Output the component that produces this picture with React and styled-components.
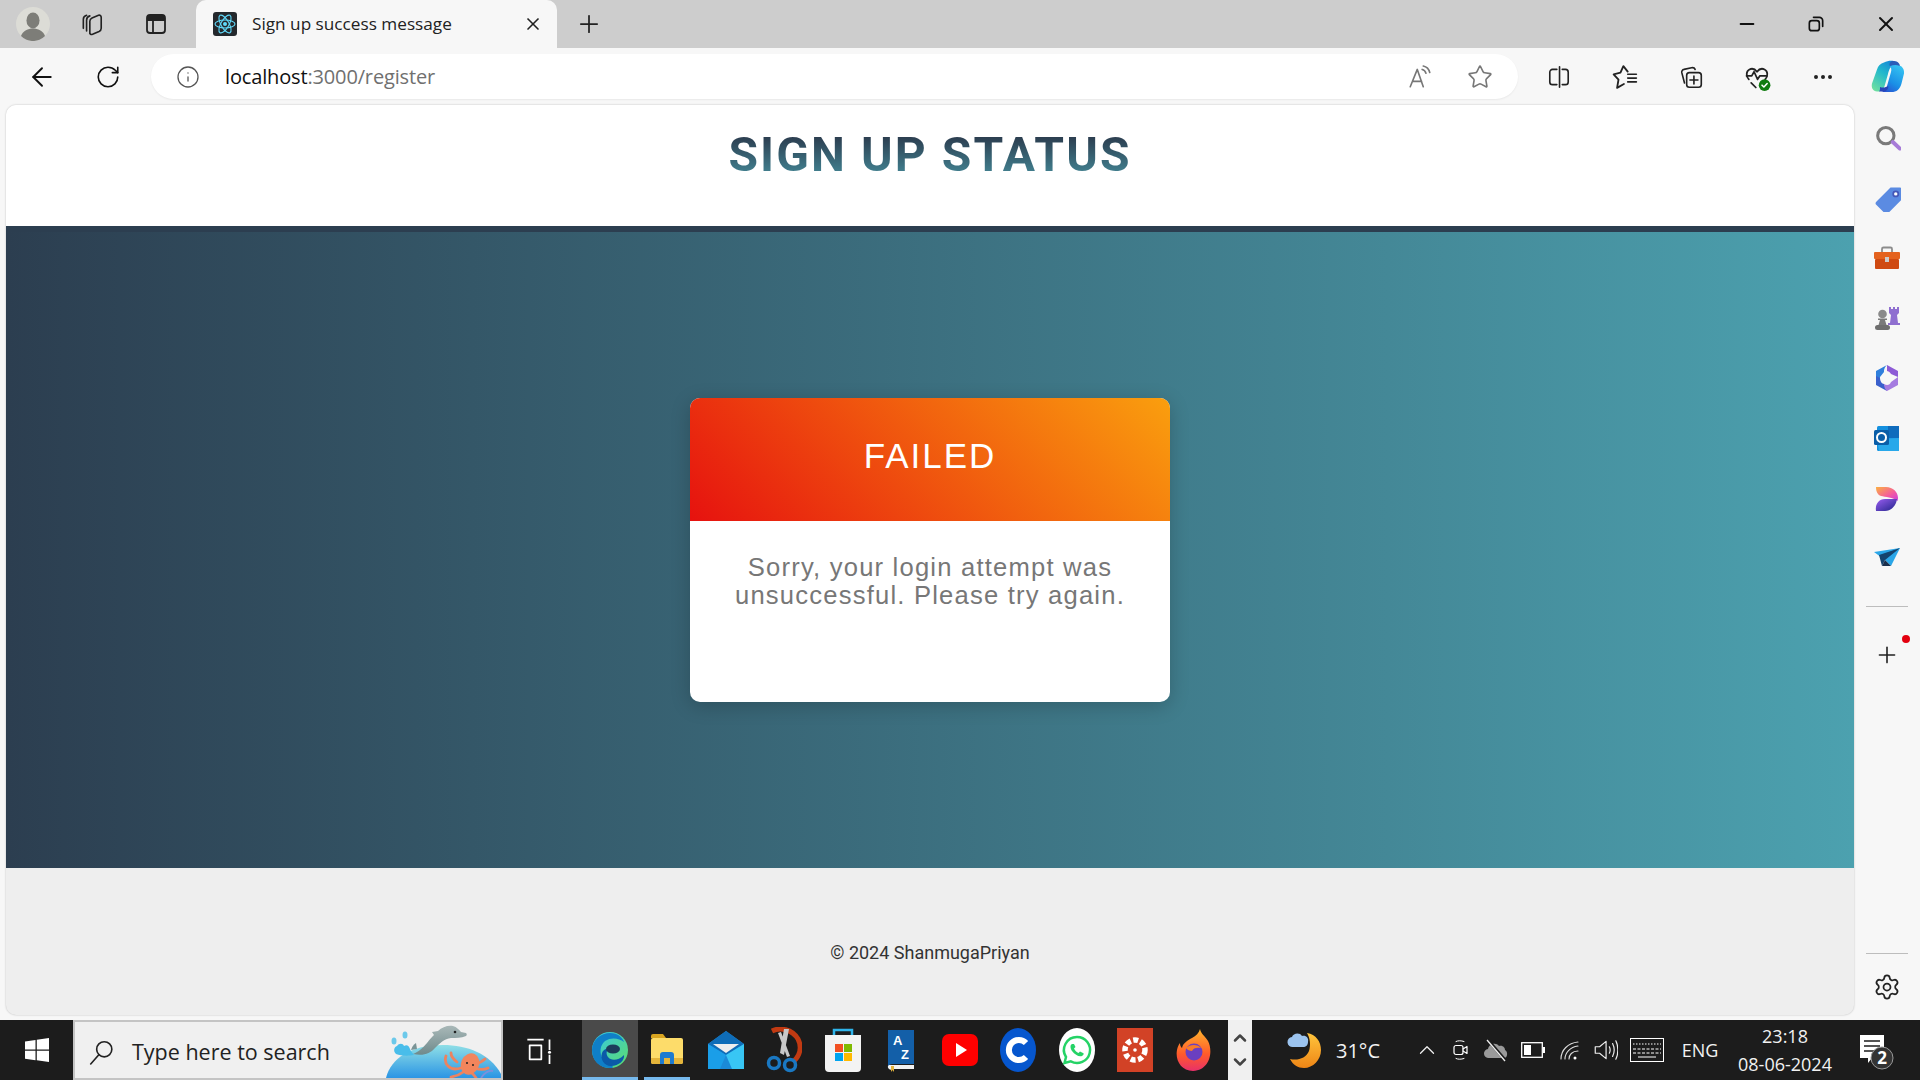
import React from 'react';
import styled, { createGlobalStyle } from 'styled-components';
import { ArrowLeft, RotateCw, Info, Star, X, Plus, Minus, Settings, ChevronUp, ChevronDown, Ellipsis } from 'lucide-react';

const Global = createGlobalStyle`
  html, body { margin: 0; padding: 0; height: 100%; overflow: hidden; }
  #root { height: 100%; }
`;

const Screen = styled.div`
  width: 1920px;
  height: 1080px;
  display: flex;
  flex-direction: column;
  background: #f7f7f7;
  font-family: "Open Sans", "Liberation Sans", sans-serif;
  overflow: hidden;
`;

// browser chrome
const TabStrip = styled.div`
  height: 48px;
  flex: none;
  display: flex;
  align-items: stretch;
  background: #cdcdcd;
  color: #111;
`;
const Cell = styled.div`
  width: ${(p) => p.$w || 60}px;
  height: ${(p) => (p.$h ? `${p.$h}px` : 'auto')};
  margin-right: ${(p) => p.$mr || 0}px;
  flex: none;
  display: flex;
  align-items: center;
  justify-content: center;
  position: relative;
`;
const Tab = styled.div`
  width: 361px;
  margin-left: 2px;
  flex: none;
  display: flex;
  align-items: center;
  padding: 0 14px 0 17px;
  box-sizing: border-box;
  background: #f7f7f7;
  border-radius: 10px 10px 0 0;
`;
const TabTitle = styled.span`
  margin: -2px 0 0 15px;
  flex: 1;
  font-size: 17.2px;
  color: #222;
  white-space: nowrap;
`;
const Spacer = styled.div`
  flex: 1;
`;
const Toolbar = styled.div`
  height: 57px;
  flex: none;
  display: flex;
  align-items: center;
  padding-left: 12px;
  box-sizing: border-box;
`;
const Address = styled.div`
  width: 1367px;
  height: 45px;
  margin: 0 8px 0 7px;
  flex: none;
  display: flex;
  align-items: center;
  background: #fff;
  border-radius: 23px;
  box-shadow: 0 1px 2px rgba(0, 0, 0, 0.06);
`;
const Url = styled.span`
  flex: 1;
  margin-left: 0;
  font-size: 20px;
  color: #111;
  letter-spacing: -0.15px;
`;
const UrlRest = styled.span`
  color: #707070;
`;

// body
const Body = styled.div`
  flex: 1;
  min-height: 0;
  display: flex;
`;
const PageFrame = styled.div`
  width: 1848px;
  margin: 0 0 5px 6px;
  flex: none;
  display: flex;
  flex-direction: column;
  background: #eee;
  border-radius: 10px;
  overflow: hidden;
  box-shadow: 0 0 2px rgba(0, 0, 0, 0.25);
`;
const PageHeader = styled.header`
  height: 127px;
  flex: none;
  box-sizing: border-box;
  padding-top: 22px;
  background: #fff;
  border-bottom: 6px solid #2c3e50;
  text-align: center;
`;
const PageTitle = styled.h1`
  margin: 0;
  display: inline-block;
  font-family: Roboto, sans-serif;
  font-size: 48px;
  font-weight: 700;
  line-height: 56px;
  letter-spacing: 2.1px;
  color: transparent;
  background: linear-gradient(180deg, #2c3e50 18%, #4ca1af 115%);
  -webkit-background-clip: text;
  background-clip: text;
`;
const Main = styled.main`
  height: 636px;
  flex: none;
  display: flex;
  align-items: center;
  justify-content: center;
  background: linear-gradient(to right, #2c3e50, #4ca1af);
`;
const Card = styled.section`
  width: 480px;
  height: 304px;
  background: #fff;
  border-radius: 10px;
  overflow: hidden;
  text-align: center;
  box-shadow: 0 4px 20px rgba(0, 0, 0, 0.2);
`;
const CardHead = styled.div`
  height: 123px;
  box-sizing: border-box;
  padding-top: 36px;
  background: linear-gradient(45deg, #e6120f, #fa9f0e);
  color: #fff;
  font-family: "Liberation Sans", Arial, sans-serif;
  font-size: 35px;
  line-height: 44px;
  letter-spacing: 2px;
`;
const CardText = styled.p`
  margin: 0;
  padding: 32px 20px 0;
  font-family: "Liberation Sans", Arial, sans-serif;
  font-size: 25.6px;
  line-height: 28px;
  letter-spacing: 1.2px;
  color: #777;
`;
const Footer = styled.footer`
  flex: 1;
  display: flex;
  align-items: flex-start;
  justify-content: center;
  padding-top: 73px;
  font-family: Roboto, sans-serif;
  font-size: 18px;
  line-height: 24px;
  color: #333;
`;

// edge sidebar
const Sidebar = styled.aside`
  width: 66px;
  flex: none;
  display: flex;
  flex-direction: column;
  align-items: center;
  padding-top: 3px;
  box-sizing: border-box;
`;
const Rule = styled.div`
  width: 42px;
  height: 1px;
  flex: none;
  margin: ${(p) => p.$m};
  background: #bdbdbd;
`;
const RedDot = styled.span`
  position: absolute;
  top: 10px;
  right: 10px;
  width: 8px;
  height: 8px;
  border-radius: 50%;
  background: #e3000f;
`;

// windows taskbar
const Taskbar = styled.div`
  height: 60px;
  flex: none;
  display: flex;
  align-items: stretch;
  background: #1c1c1c;
  color: #fff;
`;
const SearchBox = styled.div`
  width: 430px;
  flex: none;
  box-sizing: border-box;
  display: flex;
  align-items: center;
  position: relative;
  overflow: hidden;
  background: #f0f0f0;
  border: 2px solid #c4c4c4;
  color: #222;
  font-size: 21.5px;
  padding: 3px 0 0 13px;
`;
const SearchText = styled.span`
  margin-left: 18px;
  white-space: nowrap;
`;
const Scene = styled.svg`
  position: absolute;
  right: 0;
  top: 0;
`;
const AppCell = styled.div`
  width: ${(p) => p.$w || 58.5}px;
  flex: none;
  display: flex;
  align-items: center;
  justify-content: center;
  position: relative;
  background: ${(p) => (p.$active ? '#4a4a4a' : 'transparent')};
  ${(p) => p.$bar && `
    &::after {
      content: "";
      position: absolute;
      bottom: 0;
      left: 50%;
      width: ${p.$bar}px;
      height: 3px;
      transform: translateX(-50%);
      background: #76b9ed;
    }
  `}
`;
const Scroller = styled.div`
  width: 24px;
  margin-left: 5px;
  flex: none;
  display: flex;
  flex-direction: column;
  align-items: center;
  justify-content: space-between;
  padding: 8px 0;
  box-sizing: border-box;
  background: #f0f0f0;
  color: #444;
`;
const Tray = styled.div`
  flex: 1;
  display: flex;
  align-items: center;
  padding-left: 22px;
  font-size: 20px;
  color: #f2f2f2;
`;
const Temp = styled.span`
  width: 76px;
  flex: none;
`;
const TrayLabel = styled.span`
  width: 56px;
  text-align: center;
  flex: none;
  font-size: 18px;
`;
const Clock = styled.div`
  width: 110px;
  margin-left: 2px;
  flex: none;
  text-align: center;
  font-size: 18px;
  line-height: 28px;
`;

const I = ({ s = 24, vb = '0 0 24 24', children, stroke = 'none' }) => (
  <svg width={s} height={s} viewBox={vb} fill="none" stroke={stroke} strokeWidth="1.5" strokeLinecap="round" strokeLinejoin="round">
    {children}
  </svg>
);

const Avatar = () => (
  <I s={34}>
    <circle cx="12" cy="12" r="12" fill="#dcdcd6" />
    <ellipse cx="12" cy="9.5" rx="4.6" ry="5.6" fill="#7d7d78" />
    <path d="M3.5 20.5c1.6-4 5-5.3 8.5-5.3s6.900 1.300 8.500 5.300A12 12 0 0 1 3.500 20.500z" fill="#7d7d78" />
  </I>
);
const CollectionsTab = () => (
  <I s={26} stroke="#222">
    <path d="M4 16V7.500C4 5.500 5.300 4.500 7 4M7 18.500V8.500C7 6.500 8.300 5 10 4.500M10 21V9.500c0-1.500 1-2.500 2-3l6-2.500c1.500-.500 2.500.500 2.500 2v10c0 1.500-.500 2.300-2 3l-6 2.500c-1.500.500-2.500-.200-2.500-1.500z" />
  </I>
);
const VerticalTabs = () => (
  <I s={24}>
    <rect x="3" y="3" width="18" height="18" rx="3" stroke="#222" strokeWidth="1.800" />
    <path d="M3 9V6a3 3 0 0 1 3-3h12a3 3 0 0 1 3 3v3z" fill="#222" />
    <path d="M9 9v12" stroke="#222" strokeWidth="1.800" />
  </I>
);
const ReactFav = () => (
  <svg width="24" height="24" viewBox="0 0 24 24">
    <rect width="24" height="24" rx="3" fill="#24282c" />
    <g fill="none" stroke="#61dafb" strokeWidth="1.100">
      <ellipse cx="12" cy="12" rx="10" ry="4" />
      <ellipse cx="12" cy="12" rx="10" ry="4" transform="rotate(60 12 12)" />
      <ellipse cx="12" cy="12" rx="10" ry="4" transform="rotate(120 12 12)" />
    </g>
    <circle cx="12" cy="12" r="2" fill="#61dafb" />
  </svg>
);
const RestoreIcon = () => (
  <I s={20} stroke="#111">
    <rect x="4" y="8" width="12" height="12" rx="3" strokeWidth="2" />
    <path d="M9 4h7a4 4 0 0 1 4 4v7" strokeWidth="2" />
  </I>
);
const ReadAloud = () => (
  <I s={26} stroke="#777">
    <path d="M3 21 9.500 5 15 21M5 16h8.500" />
    <path d="M14 5c2 .500 3 1.800 3.500 3.500M15 1.800c3.500.700 5.300 3 6 6" />
  </I>
);
const SplitIcon = () => (
  <I s={26} stroke="#222">
    <path d="M10 5H6a2.500 2.500 0 0 0-2.500 2.500v9A2.500 2.500 0 0 0 6 19h4M15 5h3a2.500 2.500 0 0 1 2.500 2.500v9A2.500 2.500 0 0 1 18 19h-3M12.500 2.500v19" />
  </I>
);
const FavList = () => (
  <I s={26} stroke="#222">
    <path d="M14.500 7 10.500 2 7.800 8 1.500 9.500 6 14.500 4.700 22l6.300-3.500" strokeWidth="1.700" />
    <path d="M14.500 9.500h8M14.500 13h8M14.500 16.500h8" />
  </I>
);
const CollectionsAdd = () => (
  <I s={26} stroke="#222">
    <path d="M6 17.500 3.500 8A2.500 2.500 0 0 1 5.500 5l7-1.500c1.500-.300 2.800.300 3.300 1.500" />
    <rect x="8" y="8" width="13.500" height="13.500" rx="2.500" />
    <path d="M14.700 11.200v7.200M11 14.800h7.400" />
  </I>
);
const HealthIcon = () => (
  <I s={28}>
    <path d="M5 14C2.500 11.500 2.500 7 5.500 5.500c2.500-1.200 5 0 6.500 2 1.500-2 4-3.200 6.500-2 3 1.500 3 6 .500 8.500" stroke="#222" />
    <path d="M3 11h4.500l2-3.500 3 6.500 2-3h6M7 17l4 4" stroke="#222" />
    <circle cx="18.500" cy="19" r="5" fill="#107c10" />
    <path d="m16.300 19 1.600 1.600 2.800-3" stroke="#fff" strokeWidth="1.300" />
  </I>
);
const Copilot = () => (
  <svg width="45" height="48" viewBox="0 0 45 48">
    <defs>
      <linearGradient id="cpA" x1="0.800" y1="0" x2="0.150" y2="1">
        <stop offset="0" stopColor="#1582d8" />
        <stop offset=".45" stopColor="#22b8cc" />
        <stop offset="1" stopColor="#6fe0a0" />
      </linearGradient>
      <linearGradient id="cpB" x1="0.800" y1="0" x2="0.200" y2="1">
        <stop offset="0" stopColor="#35c4f2" />
        <stop offset=".6" stopColor="#1a8fe6" />
        <stop offset="1" stopColor="#2a4fd0" />
      </linearGradient>
    </defs>
    <path d="M19 9.500c4-2 9-2.500 12-.5l3 2.500-6 1.500c-3 .8-4 4-5 8l-3 10.500c-1 5-4 7.500-8 7-4-.5-6-3.500-5-8l5-14c1-3.500 3.500-6 7-7z" fill="url(#cpA)" />
    <path d="M25 13c3-1.500 7-1.500 9.500-.5 3 1 5 4 4.500 8l-2.500 10c-1.500 6-5 8.500-10 8.500H14c4 .5 6.500-2 8-6l4-14c.5-2 .5-4-1-6z" fill="url(#cpB)" />
    <path d="M26 8.500c3-1 6-.5 8 2 1 1.500 1 2.500 .5 2.500-3-1.500-6.500-1-9.500 0-1-1-.500-3.500 1-4.500z" fill="#2a5cb8" />
    <path d="M15 34c3 1 6 .5 8-1 1 2-1 5-4 5.500H14c1-.5 1-2.500 1-4.500z" fill="#2845b8" />
  </svg>
);
const SearchTool = () => (
  <I s={28}>
    <circle cx="11" cy="10" r="7" stroke="#7a7a7a" strokeWidth="2.600" />
    <path d="m17 15.500 6 5.500" stroke="#a77bd8" strokeWidth="3.400" />
  </I>
);
const TagTool = () => (
  <I s={28}>
    <path d="M15 3h8a2 2 0 0 1 2 2v8L13 25a2 2 0 0 1-3 0l-7-7a2 2 0 0 1 0-3z" fill="#5b8be2" />
    <circle cx="19.500" cy="8.500" r="2.200" fill="#fff" stroke="#4458b8" />
  </I>
);
const ToolboxTool = () => (
  <svg width="28" height="28" viewBox="0 0 28 28">
    <path d="M9 9V5a1.500 1.500 0 0 1 1.500-1.500h7A1.500 1.500 0 0 1 19 5v4" fill="none" stroke="#8c8c8c" strokeWidth="1.800" />
    <rect x="1" y="8" width="26" height="7" rx="1" fill="#e4621e" />
    <rect x="2" y="15" width="24" height="10" rx="1" fill="#cf4a12" />
    <rect x="12" y="13" width="4" height="5" fill="#ccc" />
  </svg>
);
const GamesTool = () => (
  <svg width="28" height="28" viewBox="0 0 28 28">
    <circle cx="9.500" cy="10" r="4.300" fill="#8a8a8a" />
    <path d="M5 14.500h9v1.500h-2l1.500 5h-8l1.500-5H5z" fill="#7a7a7a" />
    <rect x="2" y="21" width="15" height="5" rx="2.500" fill="#6e6e6e" />
    <path d="M16 3h2v2h2V3h2v2h2V3h2v6l-2 2 1 8h2v2H15v-2h2l1-8-2-2z" fill="#8f6fd0" />
  </svg>
);
const M365Tool = () => (
  <svg width="28" height="28" viewBox="0 0 28 28">
    <path d="M14 1 25 7v6l-7-3c-1-2-3-3-4-3z" fill="#8d5bd6" />
    <path d="M3 7 14 1c-3 3-3 5-3 7l-4 5v7l-4-2z" fill="#2f7fdc" />
    <path d="M7 14c0 3 2 6 4 6l3 7-11-6V12z" fill="#3a60cc" />
    <path d="M25 13v8l-11 6c-2-1-3-5-3-7 3 2 6 1 7-2z" fill="#a57be0" />
    <circle cx="14" cy="14" r="4.500" fill="#f7f7f7" />
  </svg>
);
const OutlookTool = () => (
  <svg width="28" height="28" viewBox="0 0 28 28">
    <rect x="4" y="1" width="22" height="25" rx="1.500" fill="#1490df" />
    <rect x="15" y="1" width="11" height="12" fill="#0f6cbd" />
    <path d="M4 14 26 13v13H6z" fill="#28a8ea" />
    <rect x="1" y="5" width="15" height="15" rx="1.500" fill="#0a5ea8" />
    <circle cx="8.500" cy="12.500" r="4.500" fill="none" stroke="#fff" strokeWidth="2" />
  </svg>
);
const DesignerTool = () => (
  <svg width="28" height="28" viewBox="0 0 28 28">
    <defs>
      <linearGradient id="dsA" x1="0" y1="0" x2="1" y2="1">
        <stop offset="0" stopColor="#fbb040" />
        <stop offset=".6" stopColor="#f45aa0" />
        <stop offset="1" stopColor="#c73be0" />
      </linearGradient>
      <linearGradient id="dsB" x1="0" y1="0" x2="1" y2="1">
        <stop offset="0" stopColor="#9a5df0" />
        <stop offset="1" stopColor="#20248a" />
      </linearGradient>
    </defs>
    <path d="M3 2h10c7 0 12 5 12 11 0 1-.200 2-.500 3C20 12 12 12 8 11 5 10 3 7 3 2z" fill="url(#dsA)" />
    <path d="M3 26c-1-6 2-12 9-12h12c-1 7-6 12-12 12z" fill="url(#dsB)" />
  </svg>
);
const PlaneTool = () => (
  <svg width="28" height="28" viewBox="0 0 28 28">
    <path d="M1 7 27 3l-9 18-6-6z" fill="#2aa6e8" />
    <path d="M6 10 27 3 12 15l-3 6z" fill="#14436e" />
    <path d="m12 15 6 6-9 0z" fill="#1b2f4c" />
  </svg>
);

const WinLogo = () => (
  <svg width="26" height="26" viewBox="0 0 26 26" fill="#fff">
    <path d="M1 4.500 11.500 3v9.500H1zM12.800 2.800 25 1v11.500H12.800zM1 13.800h10.500v9.500L1 21.800zM12.800 13.800H25V25l-12.200-1.800z" />
  </svg>
);
const Magnifier = () => (
  <I s={26} stroke="#222">
    <circle cx="15" cy="9.500" r="7" />
    <path d="M10 14.500 2.500 23" />
  </I>
);
const SearchScene = () => (
  <Scene width="120" height="56" viewBox="0 0 120 56">
    <defs>
      <linearGradient id="sea" x1="0" y1="0" x2="0" y2="1">
        <stop offset="0" stopColor="#8fdfe6" />
        <stop offset="1" stopColor="#2b95e4" />
      </linearGradient>
      <linearGradient id="dolphin" x1="0" y1="0" x2="0" y2="1">
        <stop offset="0" stopColor="#a9b8b8" />
        <stop offset="1" stopColor="#6f8a8c" />
      </linearGradient>
    </defs>
    <path d="M5 56C10 36 30 23 62 23c26 0 50 10 60 33z" fill="url(#sea)" />
    <path d="M32 32c5-2 9-5 14-11 3-4 5-6 7-8l-2-3 6-1c4-4 10-6 15-5 4 1 6 4 8 6l5 1c1 1 1 2 0 3-5 2-10 2-15 2-7 1-11 5-16 10-5 6-12 8-22 6z" fill="url(#dolphin)" />
    <path d="M30 28c1-3 2-5 5-7l1 6z" fill="#7a9496" />
    <circle cx="74" cy="10" r="1.300" fill="#222" />
    <path d="M15 32c-3-3-2-7 1-8 2-3 6-3 7 0 3-2 5 0 6 3 1 3 3 4 4 6-5 1-13 1-18-1z" fill="#49bdea" />
    <ellipse cx="13" cy="19" rx="2.500" ry="3.500" fill="#6cc9ea" />
    <ellipse cx="24" cy="13" rx="2.500" ry="3.500" fill="#6cc9ea" />
    <path d="M80 46c-6 2-10 1-13-2-3-3-3-7-2-10M84 49c-4 3-9 5-14 6M90 50c2 2 4 4 5 6M94 46c5 2 9 2 13 0M94 42c5-1 8-3 10-5M76 40c-4-3-6-6-6-9" stroke="#ec8360" strokeWidth="2.800" fill="none" strokeLinecap="round" />
    <path d="M100 56c3-5 8-8 12-7" stroke="#7c8fdc" strokeWidth="2" fill="none" />
    <ellipse cx="89" cy="42" rx="9" ry="11" fill="#f2855c" transform="rotate(25 89 42)" />
    <circle cx="86" cy="41" r="1" fill="#222" />
    <circle cx="92" cy="43" r="1" fill="#222" />
  </Scene>
);
const TaskView = () => (
  <I s={28} stroke="#fff">
    <path d="M2 3h14M2 25h5M11 25h5M4 8h10v12H4zM2 3v0M21 3v9M21 16v9" strokeLinecap="butt" />
    <circle cx="21" cy="14" r="1.300" fill="#fff" stroke="none" />
  </I>
);
const EdgeIcon = () => (
  <svg width="38" height="38" viewBox="0 0 38 38">
    <defs>
      <linearGradient id="edA" x1="0" y1="0" x2="1" y2="1">
        <stop offset="0" stopColor="#36c6e8" />
        <stop offset="1" stopColor="#5cdc6c" />
      </linearGradient>
    </defs>
    <circle cx="19" cy="19" r="18" fill="url(#edA)" />
    <path d="M1 19C1 9 10 2 19 2c8 0 13 5 14 9C28 7 20 6 14 10 9 14 8 22 12 28c2 3 5 5 9 6 1 1 1 3 0 3C9 38 1 30 1 19z" fill="#0f7fc8" />
    <path d="M33 24c1 5-5 11-13 11-7 0-11-7-9-13 1-3 4-5 7-4-3 2-3 5-1 8 3 4 10 4 16-2z" fill="#0b5aa8" />
    <ellipse cx="22" cy="18" rx="7" ry="4.500" fill="#1c3b5a" />
  </svg>
);
const ExplorerIcon = () => (
  <svg width="36" height="36" viewBox="0 0 36 36">
    <path d="M2 4a2 2 0 0 1 2-2h10l3 4H2z" fill="#d9a520" />
    <rect x="2" y="6" width="32" height="26" rx="2" fill="#fddc6a" />
    <path d="M2 26h32v4a2 2 0 0 1-2 2H4a2 2 0 0 1-2-2z" fill="#e5b53a" />
    <path d="M11 32v-9a3 3 0 0 1 3-3h8a3 3 0 0 1 3 3v9h-4v-6h-6v6z" fill="#1d7bd0" />
  </svg>
);
const MailIcon = () => (
  <svg width="36" height="38" viewBox="0 0 36 38">
    <path d="M0 13 18 0l18 13v25H0z" fill="#1b8ad8" />
    <path d="M0 13 18 0l18 13-18 11z" fill="#0f6db8" />
    <path d="M5 13h26l-13 9z" fill="#eee" />
    <path d="M18 24 36 13v25H24z" fill="#38c6f4" />
    <path d="M0 13l18 11-6 14H0z" fill="#1a9ee8" />
  </svg>
);
const SnipIcon = () => (
  <svg width="36" height="46" viewBox="0 0 36 46">
    <path d="M6 4c8-4 20-2 26 8 4 8 2 16-4 22" fill="none" stroke="#c23a12" strokeWidth="5" />
    <path d="M18 2h5l-5 26-4-2zM12 6l3-1 9 24-3 1z" fill="#c8c8c8" />
    <circle cx="8" cy="36" r="5.500" fill="none" stroke="#1a78c2" strokeWidth="3.500" />
    <circle cx="24" cy="38" r="5.500" fill="none" stroke="#1a78c2" strokeWidth="3.500" />
  </svg>
);
const StoreIcon = () => (
  <svg width="36" height="44" viewBox="0 0 36 44">
    <path d="M9 7V2h18v5" fill="none" stroke="#2fb4ea" strokeWidth="2.500" />
    <path d="M0 7h36v33a4 4 0 0 1-4 4H4a4 4 0 0 1-4-4z" fill="#f3f3f3" />
    <rect x="10" y="16" width="8" height="8" fill="#f25022" />
    <rect x="19" y="16" width="8" height="8" fill="#7fba00" />
    <rect x="10" y="25" width="8" height="8" fill="#00a4ef" />
    <rect x="19" y="25" width="8" height="8" fill="#ffb900" />
  </svg>
);
const DictIcon = () => (
  <svg width="28" height="44" viewBox="0 0 28 44">
    <path d="M1 2h26v34H6a5 5 0 0 0-5 3z" fill="#135fa8" />
    <path d="M2 37h25v4H5a2 2 0 0 1-3-4z" fill="#f2f2f2" />
    <path d="M4 38h3v6l-1.500-2L4 44z" fill="#e2b33c" />
    <text x="6" y="17" fontSize="13" fontWeight="700" fontFamily="Liberation Sans, sans-serif" fill="#fff">A</text>
    <text x="14" y="31" fontSize="13" fontWeight="700" fontFamily="Liberation Sans, sans-serif" fill="#fff">Z</text>
  </svg>
);
const YouTubeIcon = () => (
  <svg width="36" height="32" viewBox="0 0 36 32">
    <rect width="36" height="32" rx="7" fill="#f00" />
    <path d="m14 9 11 7-11 7z" fill="#fff" />
  </svg>
);
const CIcon = () => (
  <svg width="36" height="44" viewBox="0 0 36 44">
    <ellipse cx="18" cy="22" rx="18" ry="22" fill="#0656ce" />
    <path d="M26 15a10 10 0 1 0 0 14" fill="none" stroke="#fff" strokeWidth="6" />
  </svg>
);
const WhatsAppIcon = () => (
  <svg width="36" height="44" viewBox="0 0 36 44">
    <ellipse cx="18" cy="22" rx="18" ry="22" fill="#fff" />
    <path d="M18 9a13 13 0 0 0-11 20L5.500 35l6.300-1.600A13 13 0 1 0 18 9z" fill="none" stroke="#25d366" strokeWidth="2.500" />
    <path d="M13 16c-2 1-2 4 0 7 3 4 7 6 10 5 2-1 2-3 1-3l-3-1.500-1.500 1.500c-2-1-3.500-2.500-4.500-4.500l1.500-1.500L15 16z" fill="#25d366" />
  </svg>
);
const CanvasIcon = () => (
  <svg width="36" height="44" viewBox="0 0 36 44">
    <rect width="36" height="44" fill="#d24226" />
    <circle cx="18" cy="22" r="10" fill="none" stroke="#fff" strokeWidth="5.500" strokeDasharray="5 2.500" />
    <circle cx="18" cy="22" r="1.800" fill="#fff" />
  </svg>
);
const FirefoxIcon = () => (
  <svg width="36" height="44" viewBox="0 0 36 44">
    <defs>
      <linearGradient id="ffA" x1="0" y1="0" x2="0" y2="1">
        <stop offset="0" stopColor="#ffb42c" />
        <stop offset=".6" stopColor="#ff5a2a" />
        <stop offset="1" stopColor="#e8306a" />
      </linearGradient>
    </defs>
    <path d="M24 1c1 5 5 7 8 12 5 9 3 29-15 30C5 43-1 32 1 22c.500-3 1.500-5 3-7 0 3 1 4 2 5 1-5 6-8 10-10 4-2 7-5 8-9z" fill="url(#ffA)" />
    <circle cx="18" cy="24" r="8.500" fill="#6a3fc0" />
    <path d="M10 20c4-4 12-4 15 0-4-1-8 0-9 3-2 0-5-1-6-3z" fill="#f77b2a" />
  </svg>
);
const WeatherIcon = () => (
  <svg width="36" height="40" viewBox="0 0 36 40">
    <defs>
      <linearGradient id="moon" x1="0" y1="0" x2="0" y2="1">
        <stop offset="0" stopColor="#ffc53c" />
        <stop offset="1" stopColor="#ee8516" />
      </linearGradient>
    </defs>
    <path d="M20 3c9 1 14 9 14 17 0 10-8 18-17 18-6 0-11-3-14-9 8 2 16-1 19-8 2-6 1-13-2-18z" fill="url(#moon)" />
    <path d="M6 17a5 5 0 0 1-1-10c1-4 8-5 10-1 4-1 7 2 6 6 0 3-2 5-5 5z" fill="#9cc4ef" />
  </svg>
);
const MeetIcon = () => (
  <I s={24} stroke="#fff">
    <path d="M8 3.500c2-1 5-1 8 0M8 20.500c2 1 5 1 8 0" strokeWidth="1" />
    <rect x="6" y="7.500" width="9" height="9" rx="2" strokeWidth="1.200" />
    <path d="m15 11 4-2.500v7L15 13" strokeWidth="1.200" />
  </I>
);
const CloudOff = () => (
  <svg width="26" height="24" viewBox="0 0 26 24">
    <path d="M6 20a4.500 4.500 0 0 1-1-9c1-5 8-7 11-3 4-1 6 2 6 4 3 1 3 8-1 8z" fill="#9a9a9a" />
    <path d="M5 2 23 23" stroke="#1c1c1c" strokeWidth="3" />
    <path d="M4 2 22 23" stroke="#eee" strokeWidth="1.300" />
  </svg>
);
const Battery = () => (
  <svg width="24" height="16" viewBox="0 0 24 16">
    <rect x=".7" y=".7" width="20.600" height="14.600" fill="none" stroke="#fff" strokeWidth="1.300" />
    <rect x="3" y="3" width="7" height="10" fill="#fff" />
    <rect x="22" y="5" width="2" height="6" fill="#fff" />
  </svg>
);
const Wifi = () => (
  <I s={24} stroke="#ddd">
    <path d="M3 21c0-9 7-16 17-17M7 21c0-6 5-12 13-13M11 21c0-4 3-8 9-8" strokeWidth="1.100" />
    <circle cx="17" cy="20" r="1.500" fill="#fff" stroke="none" />
  </I>
);
const Volume = () => (
  <I s={26} stroke="#eee">
    <path d="M3 9h4l6-5v16l-6-5H3z" strokeWidth="1.100" />
    <path d="M16 9c1 2 1 4 0 6M19 6c2 4 2 8 0 12M22 3.500c2.500 5 2.500 12 0 17" strokeWidth="1.100" />
  </I>
);
const KeyboardIcon = () => (
  <svg width="34" height="24" viewBox="0 0 34 24" fill="none" stroke="#fff">
    <rect x=".5" y=".5" width="33" height="23" />
    <path d="M3 6h28" strokeDasharray="1.500 1.500" />
    <path d="M3 11h28M3 15h28" strokeDasharray="3 1.500" />
    <path d="M8 19h18" />
  </svg>
);
const Notification = () => (
  <svg width="40" height="40" viewBox="0 0 40 40">
    <path d="M5 5h24v23H17l-4 5v-5H5z" fill="#fff" />
    <path d="M9 11h16M9 16h16M9 21h12" stroke="#1c1c1c" strokeWidth="1.500" />
    <circle cx="27" cy="28" r="11" fill="#333" stroke="#999" />
    <text x="27" y="34" textAnchor="middle" fontSize="17" fontWeight="700" fontFamily="Open Sans, sans-serif" fill="#fff">2</text>
  </svg>
);

const sideTools = [SearchTool, TagTool, ToolboxTool, GamesTool, M365Tool, OutlookTool, DesignerTool, PlaneTool];
const pinnedApps = [ExplorerIcon, MailIcon, SnipIcon, StoreIcon, DictIcon, YouTubeIcon, CIcon, WhatsAppIcon, CanvasIcon, FirefoxIcon];

export default function App() {
  return (
    <Screen>
      <Global />
      <TabStrip>
        <Cell $w={66}><Avatar /></Cell>
        <Cell $w={52}><CollectionsTab /></Cell>
        <Cell $w={76}><VerticalTabs /></Cell>
        <Tab>
          <ReactFav />
          <TabTitle>Sign up success message</TabTitle>
          <X size={20} color="#222" />
        </Tab>
        <Cell $w={64}><Plus size={28} strokeWidth={1.5} color="#222" /></Cell>
        <Spacer />
        <Cell $w={69}><Minus size={22} color="#111" /></Cell>
        <Cell $w={70}><RestoreIcon /></Cell>
        <Cell $w={69}><X size={24} color="#111" /></Cell>
      </TabStrip>

      <Toolbar>
        <Cell $w={60}><ArrowLeft size={30} strokeWidth={1.5} color="#111" /></Cell>
        <Cell $w={72}><RotateCw size={26} strokeWidth={1.5} color="#111" /></Cell>
        <Address>
          <Cell $w={74}><Info size={24} strokeWidth={1.300} color="#555" /></Cell>
          <Url>localhost<UrlRest>:3000/register</UrlRest></Url>
          <Cell $w={60}><ReadAloud /></Cell>
          <Cell $w={60}><Star size={26} strokeWidth={1.500} color="#777" /></Cell>
          <Cell $w={8} />
        </Address>
        <Cell $w={66}><SplitIcon /></Cell>
        <Cell $w={66}><FavList /></Cell>
        <Cell $w={66}><CollectionsAdd /></Cell>
        <Cell $w={66}><HealthIcon /></Cell>
        <Cell $w={66}><Ellipsis size={24} color="#222" /></Cell>
        <Cell $w={62}><Copilot /></Cell>
      </Toolbar>

      <Body>
        <PageFrame>
          <PageHeader>
            <PageTitle>SIGN UP STATUS</PageTitle>
          </PageHeader>
          <Main>
            <Card>
              <CardHead>FAILED</CardHead>
              <CardText>Sorry, your login attempt was unsuccessful. Please try again.</CardText>
            </Card>
          </Main>
          <Footer>© 2024 ShanmugaPriyan</Footer>
        </PageFrame>
        <Sidebar>
          {sideTools.map((Tool, i) => (
            <Cell key={i} $w={66} $h={60.100}><Tool /></Cell>
          ))}
          <Rule $m="17px 0 18px" />
          <Cell $w={66} $h={60}>
            <Plus size={26} strokeWidth={1.500} color="#222" />
            <RedDot />
          </Cell>
          <Spacer />
          <Rule />
          <Cell $w={66} $h={66}><Settings size={28} strokeWidth={1.500} color="#222" /></Cell>
        </Sidebar>
      </Body>

      <Taskbar>
        <Cell $w={73}><WinLogo /></Cell>
        <SearchBox>
          <Magnifier />
          <SearchText>Type here to search</SearchText>
          <SearchScene />
        </SearchBox>
        <Cell $w={71} $mr={8}><TaskView /></Cell>
        <AppCell $active $bar={56} $w={56}><EdgeIcon /></AppCell>
        {pinnedApps.map((AppIcon, i) => (
          <AppCell key={i} $bar={i === 0 ? 46 : 0}><AppIcon /></AppCell>
        ))}
        <Scroller>
          <ChevronUp size={20} strokeWidth={3} />
          <ChevronDown size={20} strokeWidth={3} />
        </Scroller>
        <Tray>
          <Cell $w={62}><WeatherIcon /></Cell>
          <Temp>31°C</Temp>
          <Cell $w={30}><ChevronUp size={26} strokeWidth={1.200} color="#eee" /></Cell>
          <Cell $w={36}><MeetIcon /></Cell>
          <Cell $w={36}><CloudOff /></Cell>
          <Cell $w={37}><Battery /></Cell>
          <Cell $w={37}><Wifi /></Cell>
          <Cell $w={34}><Volume /></Cell>
          <Cell $w={50}><KeyboardIcon /></Cell>
          <TrayLabel>ENG</TrayLabel>
          <Clock>23:18<br />08-06-2024</Clock>
          <Cell $w={70}><Notification /></Cell>
        </Tray>
      </Taskbar>
    </Screen>
  );
}
